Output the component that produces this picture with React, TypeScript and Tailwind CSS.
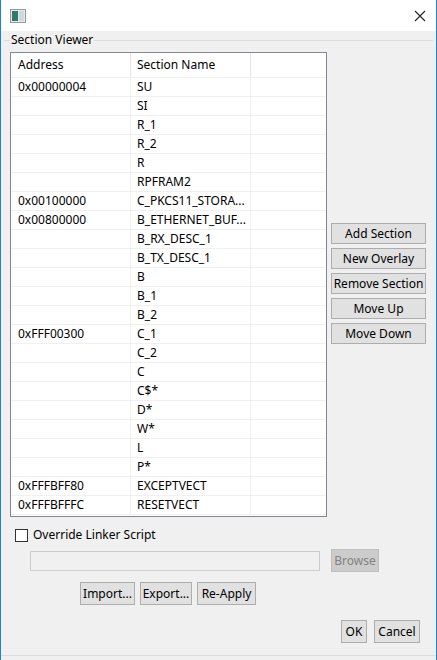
const rows: [string, string][] = [
  ["0x00000004", "SU"], ["", "SI"], ["", "R_1"], ["", "R_2"], ["", "R"], ["", "RPFRAM2"],
  ["0x00100000", "C_PKCS11_STORA..."], ["0x00800000", "B_ETHERNET_BUF..."], ["", "B_RX_DESC_1"],
  ["", "B_TX_DESC_1"], ["", "B"], ["", "B_1"], ["", "B_2"], ["0xFFF00300", "C_1"], ["", "C_2"],
  ["", "C"], ["", "C$*"], ["", "D*"], ["", "W*"], ["", "L"], ["", "P*"],
  ["0xFFFBFF80", "EXCEPTVECT"], ["0xFFFBFFFC", "RESETVECT"],
];

const btn = "h-[21px] border border-[#adadad] bg-[#e1e1e1] text-[12px] text-black flex items-center justify-center";

export default function App() {
  return (
    <div className="w-[437px] h-[660px] bg-[#f0f0f0] flex flex-col border-x border-[#1883d7] text-[12px] text-black" style={{ fontFamily: '"Noto Sans", "Open Sans", sans-serif' }}>
      {/* title bar */}
      <div className="h-[31px] bg-white flex items-center justify-between pl-[9px] pr-[10px] shrink-0">
        <svg width="16" height="14" viewBox="0 0 16 14">
          <rect x="0.5" y="0.5" width="15" height="13" fill="#e8e8e8" stroke="#9a9a9a" />
          <rect x="2" y="2" width="6" height="10" fill="#2f7a6e" />
          <rect x="9" y="2" width="5" height="10" fill="#cfd8dc" />
        </svg>
        <svg width="12" height="12" viewBox="0 0 12 12" stroke="#222" strokeWidth="1.1">
          <path d="M1 1 L11 11 M11 1 L1 11" />
        </svg>
      </div>

      {/* group box */}
      <div className="relative mt-[9px] mx-[3px] border-t border-[#dcdcdc] flex-1 flex flex-col">
        <span className="absolute -top-[9px] left-[6px] bg-[#f0f0f0] px-[1px] leading-[16px]">Section Viewer</span>
        <div className="flex mt-[11px] pl-[6px]">
          <div className="w-[317px] h-[465px] bg-white border border-[#828790] overflow-hidden">
            <div className="flex h-[25px] items-center border-b border-[#f0f0f0]">
              <div className="w-[120px] pl-[7px] h-full flex items-center border-r border-[#e5e5e5]">Address</div>
              <div className="w-[120px] pl-[6px] h-full flex items-center border-r border-[#e5e5e5]">Section Name</div>
            </div>
            {rows.map(([a, n], i) => (
              <div key={i} className="flex h-[19px] items-center border-b border-[#f0f0f0]">
                <div className="w-[120px] pl-[7px] h-full flex items-center border-r border-[#f0f0f0]">{a}</div>
                <div className="w-[120px] pl-[6px] h-full flex items-center border-r border-[#f0f0f0]">{n}</div>
              </div>
            ))}
          </div>
          <div className="flex flex-col gap-[4px] ml-[4px] mt-[171px] w-[95px]">
            <div className={btn}>Add Section</div>
            <div className={btn}>New Overlay</div>
            <div className={btn}>Remove Section</div>
            <div className={btn}>Move Up</div>
            <div className={btn}>Move Down</div>
          </div>
        </div>

        <div className="flex items-center gap-[5px] mt-[9px] ml-[11px]">
          <div className="w-[13px] h-[13px] border border-[#333] bg-white" />
          <span>Override Linker Script</span>
        </div>

        <div className="flex items-center mt-[5px] ml-[26px]">
          <div className="w-[290px] h-[20px] border border-[#cccccc] bg-[#f0f0f0]" />
          <div className="ml-[11px] w-[48px] h-[23px] border border-[#bfbfbf] bg-[#cccccc] text-[#838383] flex items-center justify-center">Browse</div>
        </div>

        <div className="flex gap-[5px] mt-[10px] ml-[76px]">
          <div className={btn + " w-[55px] h-[23px]"}>Import...</div>
          <div className={btn + " w-[52px] h-[23px]"}>Export...</div>
          <div className={btn + " w-[59px] h-[23px]"}>Re-Apply</div>
        </div>

        <div className="flex justify-end gap-[7px] mt-[15px] mr-[13px]">
          <div className={btn + " w-[26px] h-[23px]"}>OK</div>
          <div className={btn + " w-[46px] h-[23px]"}>Cancel</div>
        </div>
      </div>
      <div className="h-[5px] border-t border-[#dcdcdc] shrink-0" />
    </div>
  );
}
